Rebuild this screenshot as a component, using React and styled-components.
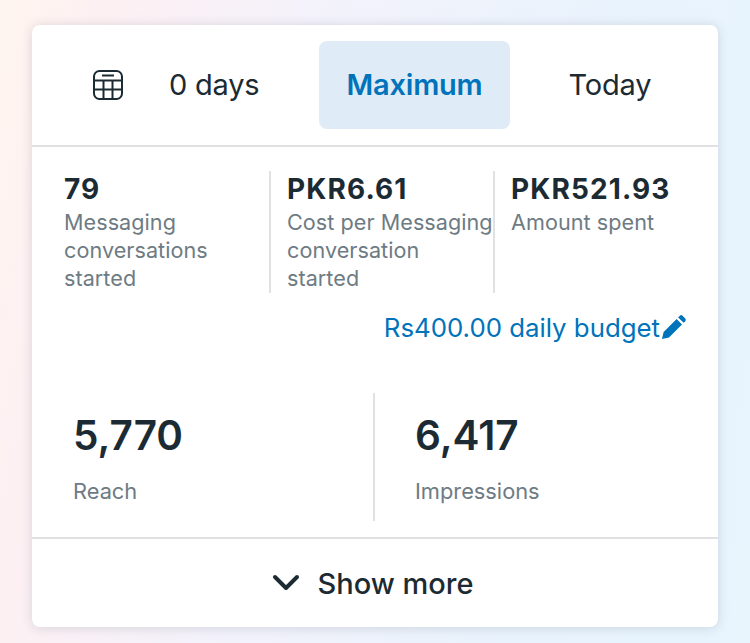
import React from 'react';
import styled, { createGlobalStyle } from 'styled-components';

const GlobalStyle = createGlobalStyle`
  html, body {
    margin: 0;
    padding: 0;
  }
  body {
    font-family: Inter, "Noto Sans", sans-serif;
    color: #1c2b33;
  }
`;

const Page = styled.div`
  width: 750px;
  height: 643px;
  box-sizing: border-box;
  padding: 25px 32px 16px;
  background: linear-gradient(100deg, #fff5ef 0%, #fdf0f3 12%, #f3f2fb 38%, #e9f3fd 72%, #e8f5fd 100%);
  overflow: hidden;
`;

const Card = styled.div`
  height: 602px;
  background: #fff;
  border-radius: 8px;
  box-shadow: 0 1px 12px rgba(40, 50, 70, 0.16);
  display: flex;
  flex-direction: column;
`;

const Tabs = styled.div`
  height: 122px;
  flex: none;
  box-sizing: border-box;
  padding: 16px 8px 16px 0;
  display: flex;
  align-items: stretch;
  border-bottom: 2px solid #dfe1e3;
`;

const IconCell = styled.div`
  width: 137px;
  flex: none;
  display: flex;
  align-items: center;
  padding-left: 60px;
  box-sizing: border-box;
`;

const Tab = styled.div`
  flex: ${p => (p.$grow ? '1' : 'none')};
  width: ${p => p.$width}px;
  display: flex;
  align-items: center;
  justify-content: ${p => (p.$start ? 'flex-start' : 'center')};
  padding-bottom: 2px;
  box-sizing: border-box;
  border-radius: 8px;
  font-size: 29px;
  letter-spacing: -0.2px;
  font-weight: ${p => (p.$active ? 600 : 400)};
  color: ${p => (p.$active ? '#0073ba' : '#1c2b33')};
  background: ${p => (p.$active ? '#dfebf6' : 'transparent')};
`;

const Stats = styled.div`
  display: grid;
  grid-template-columns: 205px 224px 1fr;
  margin: 24px 0 0 32px;
  height: 122px;
`;

const Stat = styled.div`
  box-sizing: border-box;
  height: 122px;
  border-left: ${p => (p.$first ? 'none' : '2px solid #dfe1e3')};
  padding-left: ${p => (p.$first ? 0 : 16)}px;
`;

const StatValue = styled.div`
  font-size: 28px;
  line-height: 37px;
  font-weight: 700;
  letter-spacing: 1.1px;
`;

const StatLabel = styled.div`
  font-size: 21.6px;
  line-height: 28px;
  letter-spacing: 0.05px;
  color: #6e7b83;
  white-space: nowrap;
`;

const Budget = styled.div`
  display: flex;
  justify-content: flex-end;
  align-items: center;
  gap: 1px;
  margin: 19px 31px 0 0;
  height: 30px;
  font-size: 25.8px;
  color: #0073ba;
`;

const Metrics = styled.div`
  display: grid;
  grid-template-columns: 309px 1fr;
  margin: 51px 0 0 32px;
  height: 128px;
`;

const Metric = styled.div`
  box-sizing: border-box;
  height: 128px;
  border-left: ${p => (p.$first ? 'none' : '2px solid #dfe1e3')};
  padding: 18px 0 0 ${p => (p.$first ? 9 : 40)}px;
`;

const MetricValue = styled.div`
  font-size: 40.5px;
  line-height: 50px;
  font-weight: 600;
`;

const MetricLabel = styled.div`
  margin-top: 16px;
  font-size: 21.8px;
  line-height: 28px;
  color: #6e7b83;
`;

const ShowMore = styled.div`
  flex: 1;
  margin-top: 16px;
  padding-right: 5px;
  border-top: 2px solid #dfe1e3;
  display: flex;
  align-items: center;
  justify-content: center;
  gap: 18px;
  font-size: 29px;
  font-weight: 500;
`;

const TableIcon = () => (
  <svg width="32" height="32" viewBox="0 0 32 32" fill="none" stroke="#1c2b33" strokeWidth="2">
    <rect x="2" y="2" width="28" height="28" rx="5.5" />
    <path d="M10 6.5h12" />
    <path d="M2 11.5h28M2 20.5h28M11.5 11.5V30M20.5 11.5V30" />
  </svg>
);

const PencilIcon = () => (
  <svg width="26" height="26" viewBox="0 0 26 26" fill="#0073ba">
    <path d="M1 25l1.6-7L15.6 5l5.4 5.4L8 23.4z" />
    <path d="M17.2 3.4l1.6-1.6a2 2 0 0 1 2.8 0l2.6 2.6a2 2 0 0 1 0 2.8l-1.6 1.6z" />
  </svg>
);

const ChevronIcon = () => (
  <svg width="28" height="18" viewBox="0 0 28 18" fill="none" stroke="#1c2b33" strokeWidth="4" strokeLinecap="round" strokeLinejoin="round">
    <path d="M3 3l11 11L25 3" />
  </svg>
);

const App = () => {
  return (
    <Page>
      <GlobalStyle />
      <Card>
        <Tabs>
          <IconCell>
            <TableIcon />
          </IconCell>
          <Tab $width={150} $start>0 days</Tab>
          <Tab $width={191} $active>Maximum</Tab>
          <Tab $grow>Today</Tab>
        </Tabs>
        <Stats>
          <Stat $first>
            <StatValue>79</StatValue>
            <StatLabel>Messaging<br />conversations<br />started</StatLabel>
          </Stat>
          <Stat>
            <StatValue>PKR6.61</StatValue>
            <StatLabel>Cost per Messaging<br />conversation<br />started</StatLabel>
          </Stat>
          <Stat>
            <StatValue>PKR521.93</StatValue>
            <StatLabel>Amount spent</StatLabel>
          </Stat>
        </Stats>
        <Budget>
          Rs400.00 daily budget
          <PencilIcon />
        </Budget>
        <Metrics>
          <Metric $first>
            <MetricValue>5,770</MetricValue>
            <MetricLabel>Reach</MetricLabel>
          </Metric>
          <Metric>
            <MetricValue>6,417</MetricValue>
            <MetricLabel>Impressions</MetricLabel>
          </Metric>
        </Metrics>
        <ShowMore>
          <ChevronIcon />
          Show more
        </ShowMore>
      </Card>
    </Page>
  );
};

export default App;
